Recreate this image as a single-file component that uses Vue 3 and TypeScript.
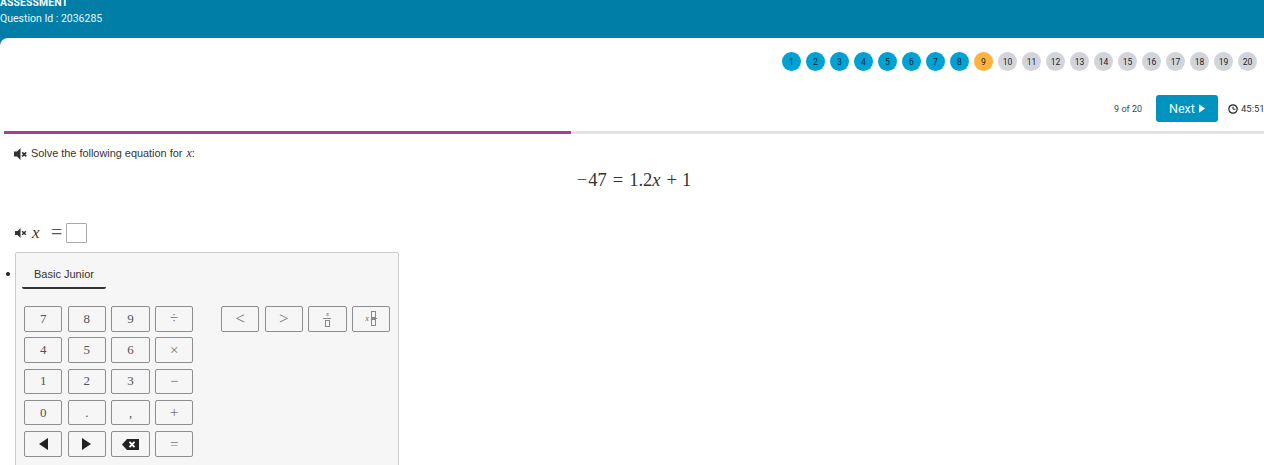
<script setup lang="ts">
const steps: { n: number; state: string }[] = Array.from({ length: 20 }, (_, i) => ({
  n: i + 1,
  state: i < 8 ? 'done' : i === 8 ? 'current' : 'todo',
}))
const leftKeys: { label: string; op?: boolean; icon?: string }[] = [
  { label: '7' }, { label: '8' }, { label: '9' }, { label: '÷', op: true },
  { label: '4' }, { label: '5' }, { label: '6' }, { label: '×', op: true },
  { label: '1' }, { label: '2' }, { label: '3' }, { label: '−', op: true },
  { label: '0' }, { label: '.' }, { label: ',' }, { label: '+', op: true },
  { label: '', icon: 'left' }, { label: '', icon: 'right' }, { label: '', icon: 'back' }, { label: '=', op: true },
]
</script>

<template>
  <div class="page">
    <header class="top">
      <div class="title">ASSESSMENT</div>
      <div class="qid">Question Id : 2036285</div>
    </header>
    <main class="sheet">
      <nav class="steps">
        <span v-for="s in steps" :key="s.n" class="step" :class="s.state">{{ s.n }}</span>
      </nav>
      <div class="controls">
        <span class="count">9 of 20</span>
        <button class="next">Next
          <svg class="next-arrow" viewBox="0 0 7 10" width="7" height="10"><path d="M0 0 L7 5 L0 10 Z" fill="#fff" /></svg>
        </button>
        <span class="timer">
          <svg class="clock" viewBox="0 0 10 10" width="10" height="10"><circle cx="5" cy="5" r="4.2" fill="none" stroke="#222" stroke-width="1.2" /><path d="M5 2.6 V5.2 H7.4" fill="none" stroke="#222" stroke-width="1" /></svg>
          45:51
        </span>
      </div>
      <div class="progress"><div class="progress-fill"></div></div>

      <div class="prompt">
        <svg class="speaker" viewBox="0 0 13 12" width="13" height="12"><path d="M0 3.5 H3 L6.5 0 V12 L3 8.5 H0 Z" fill="#333" /><path d="M8.2 4.4 L12.2 8.4 M12.2 4.4 L8.2 8.4" stroke="#333" stroke-width="1.6" /></svg>
        <span>Solve the following equation for <i class="mathvar">x</i>:</span>
      </div>
      <div class="equation"><span class="minus">−</span><span>47</span><span class="rel">=</span><span>1.2<i class="eq-x">x</i></span><span class="bin">+</span><span>1</span></div>

      <div class="answer">
        <svg class="speaker small" viewBox="0 0 12 10" width="12" height="10"><path d="M0 3 H2.5 L5.5 0 V10 L2.5 7 H0 Z" fill="#333" /><path d="M7.2 3.2 L10.8 6.8 M10.8 3.2 L7.2 6.8" stroke="#333" stroke-width="1.5" /></svg>
        <i class="answer-x">x</i>
        <span class="answer-eq">=</span>
        <span class="answer-box"></span>
      </div>

      <div class="kbd-row">
        <span class="bullet"></span>
        <section class="keyboard">
          <div class="tab">Basic Junior</div>
          <div class="pads">
            <div class="pad">
              <button v-for="(k, i) in leftKeys" :key="i" class="key" :class="{ op: k.op }">
                <template v-if="k.label">{{ k.label }}</template>
                <svg v-else-if="k.icon === 'left'" viewBox="0 0 9 12" width="9" height="12"><path d="M9 0 L0 6 L9 12 Z" fill="#222" /></svg>
                <svg v-else-if="k.icon === 'right'" viewBox="0 0 9 12" width="9" height="12"><path d="M0 0 L9 6 L0 12 Z" fill="#222" /></svg>
                <svg v-else viewBox="0 0 17 11" width="17" height="11"><path d="M0 5.5 L5 0 H17 V11 H5 Z" fill="#222" /><path d="M7.5 2.8 L12.5 8.2 M12.5 2.8 L7.5 8.2" stroke="#fff" stroke-width="1.8" /></svg>
              </button>
            </div>
            <div class="pad second">
              <button class="key op sym">&lt;</button>
              <button class="key op sym">&gt;</button>
              <button class="key">
                <span class="frac"><i>x</i><span class="bar"></span><span class="box"></span></span>
              </button>
              <button class="key">
                <span class="mixed"><i>x</i><span class="frac"><span class="box"></span><span class="bar short"></span><span class="box"></span></span></span>
              </button>
            </div>
          </div>
        </section>
      </div>
    </main>
  </div>
</template>

<style>
html, body { margin: 0; background: #fff; overflow: hidden; }
</style>

<style scoped>
.page {
  width: 1264px;
  height: 465px;
  overflow: hidden;
  background: #007ea7;
  font-family: Roboto, "Liberation Sans", sans-serif;
}
.top {
  height: 38px;
  box-sizing: border-box;
  color: #fff;
  overflow: hidden;
}
.title {
  margin-top: -4px;
  font-size: 10.4px;
  line-height: 13px;
  font-weight: 700;
  letter-spacing: 0.1px;
}
.qid {
  margin-top: 3px;
  font-size: 10.5px;
  line-height: 14px;
  color: #eef7fa;
}
.sheet {
  height: 427px;
  background: #fff;
  border-top-left-radius: 8px;
  overflow: hidden;
}
.steps {
  display: flex;
  justify-content: flex-end;
  gap: 5px;
  padding: 14px 7px 0 0;
}
.step {
  width: 19px;
  height: 19px;
  border-radius: 50%;
  display: flex;
  align-items: center;
  justify-content: center;
  font-size: 8.5px;
  color: #222;
}
.step.done { background: #00a1d3; color: #123; }
.step.current { background: #ffb33e; }
.step.todo { background: #d2d4dc; }
.controls {
  display: flex;
  align-items: center;
  justify-content: flex-end;
  height: 27px;
  margin-top: 24px;
}
.count {
  font-size: 9px;
  color: #444;
  margin-right: 14px;
}
.next {
  width: 62px;
  height: 27px;
  padding: 0;
  border: 0;
  border-radius: 3px;
  background: #0093bf;
  color: #f2fafc;
  font-family: Roboto, sans-serif;
  font-size: 12.5px;
  display: flex;
  align-items: center;
  justify-content: center;
  gap: 4px;
}
.next-arrow { width: 6px; height: 9px; }
.timer {
  display: flex;
  align-items: center;
  gap: 3px;
  margin-left: 10px;
  font-size: 9.5px;
  color: #333;
  width: 36px;
  white-space: nowrap;
}
.clock { flex: none; }
.progress {
  height: 3px;
  margin: 9px 0 0 4px;
  background: #e3e3e3;
}
.progress-fill {
  width: 567px;
  height: 3px;
  background: #a63d9a;
}
.prompt {
  display: flex;
  align-items: center;
  gap: 4px;
  margin: 13px 0 0 14px;
  height: 13px;
  font-family: "Liberation Sans", sans-serif;
  font-size: 10.9px;
  color: #333;
}
.mathvar { font-family: "Liberation Serif", serif; font-size: 12px; margin-left: 1px; }
.equation {
  display: flex;
  justify-content: center;
  margin: 9px 0 0 4px;
  height: 22px;
  font-family: "Liberation Serif", serif;
  font-size: 18.5px;
  line-height: 22px;
  color: #333;
}
.minus { margin-right: 1px; }
.eq-x { margin-right: 1px; }
.rel { margin: 0 6px; }
.bin { margin: 0 5px; }
.answer {
  display: flex;
  align-items: center;
  height: 21px;
  margin: 31px 0 0 15px;
  font-family: "Liberation Serif", serif;
  color: #333;
}
.answer-x { font-size: 17px; margin-left: 5px; width: 19px; }
.answer-eq { font-size: 20px; width: 15px; color: #555; }
.answer-box {
  width: 19px;
  height: 18px;
  border: 1px solid #aaa;
  border-radius: 1px;
}
.kbd-row {
  display: flex;
  margin: 9px 0 0 6px;
}
.bullet {
  width: 4px;
  height: 4px;
  border-radius: 50%;
  background: #222;
  margin: 20px 5px 0 0;
}
.keyboard {
  width: 382px;
  height: 240px;
  flex: none;
  background: #f6f6f6;
  border: 1px solid #ccc;
  border-radius: 2px 2px 0 0;
  font-family: "Liberation Sans", sans-serif;
}
.tab {
  width: 84px;
  height: 36px;
  box-sizing: border-box;
  margin-left: 6px;
  padding: 15px 0 0 12px;
  font-size: 11px;
  line-height: 13px;
  color: #333;
  border-bottom: 2px solid #333;
  border-radius: 0 0 2px 2px;
}
.pads {
  display: flex;
  gap: 27.6px;
  margin: 17px 0 0 8px;
}
.pad {
  display: grid;
  grid-template-columns: repeat(4, 38.4px);
  grid-auto-rows: 25.5px;
  column-gap: 5.27px;
  row-gap: 5.83px;
  align-content: start;
}
.key {
  padding: 0;
  background: #f6f6f6;
  border: 1px solid #8e8e8e;
  border-radius: 2px;
  font-family: "Liberation Serif", serif;
  font-size: 13px;
  color: #555;
  display: flex;
  align-items: center;
  justify-content: center;
}
.key.op { color: #777; font-size: 15px; }
.key.sym { font-size: 17px; }
.frac {
  display: inline-flex;
  flex-direction: column;
  align-items: center;
  font-size: 7px;
  line-height: 6px;
  color: #666;
}
.bar {
  width: 8px;
  height: 1px;
  background: #888;
  margin: 1px 0;
}
.bar.short { width: 6px; margin: 0; }
.box {
  width: 3px;
  height: 5px;
  border: 1px solid #888;
}
.mixed {
  display: inline-flex;
  align-items: center;
  gap: 2px;
  font-size: 8px;
  color: #666;
}
</style>
